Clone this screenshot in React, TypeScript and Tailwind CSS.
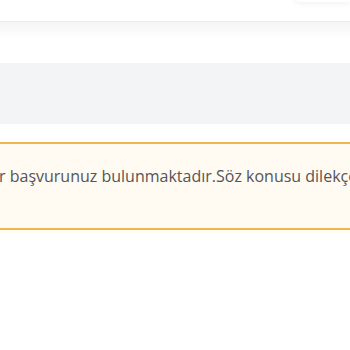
export default function App() {
  return (
    <div className="w-[350px] h-[350px] overflow-hidden bg-white" style={{ fontFamily: '"Open Sans", "Liberation Sans", sans-serif' }}>
      <div className="relative h-[21px] bg-white">
        <div className="absolute right-0 top-[-20px] w-[56px] h-[22px] bg-white rounded-bl-md shadow-[0_2px_5px_rgba(0,0,0,0.05)]" />
      </div>
      <div className="h-px bg-[#ececec]" />
      <div className="h-[41px] bg-gradient-to-b from-[#f4f4f4] to-white to-40%" />
      <div className="h-[61px] bg-[#f3f4f6]" />
      <div className="h-[18px] bg-white" />
      <div className="h-[88px] border-y-2 border-[#ecb84d] bg-[#fffaf2] pt-[20px] overflow-hidden">
        <p className="whitespace-nowrap text-[16px] leading-[24px] text-[#555] ml-[-1px]">
          r başvurunuz bulunmaktadır.Söz konusu dilekçe
        </p>
      </div>
      <div className="h-[3px] bg-[#fffcf3]" />
    </div>
  )
}
